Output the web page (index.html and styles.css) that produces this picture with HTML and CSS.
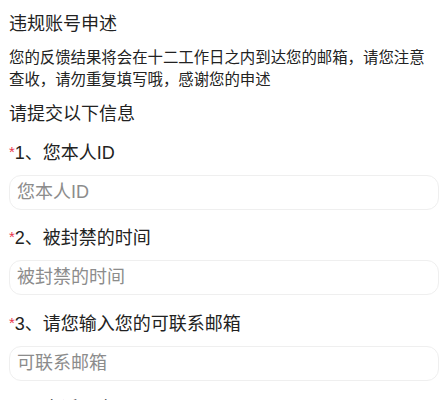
FILE: index.html
```html
<!DOCTYPE html>
<html lang="zh-CN">
<head>
<meta charset="utf-8">
<title>违规账号申述</title>
<link rel="stylesheet" href="styles.css">
</head>
<body>
<div class="page">
  <h1 class="title">违规账号申述</h1>
  <p class="notice">您的反馈结果将会在十二工作日之内到达您的邮箱，请您注意查收，请勿重复填写哦，感谢您的申述</p>
  <h2 class="section">请提交以下信息</h2>
  <form class="form">
    <div class="item">
      <label class="label"><span class="req">*</span>1、您本人ID</label>
      <input class="field" type="text" placeholder="您本人ID">
    </div>
    <div class="item">
      <label class="label"><span class="req">*</span>2、被封禁的时间</label>
      <input class="field" type="text" placeholder="被封禁的时间">
    </div>
    <div class="item">
      <label class="label"><span class="req">*</span>3、请您输入您的可联系邮箱</label>
      <input class="field" type="text" placeholder="可联系邮箱">
    </div>
    <div class="item">
      <label class="label"><span class="req">*</span>4、申诉理由</label>
      <input class="field" type="text" placeholder="申诉理由">
    </div>
  </form>
</div>
</body>
</html>
```
FILE: styles.css
```css
* { box-sizing: border-box; }
html, body { margin: 0; padding: 0; background: #fff; }
body {
  font-family: "Liberation Sans", "Noto Sans CJK SC", sans-serif;
  color: #222;
}
.page { padding: 10.5px 9px 0 9px; }
.title {
  margin: 0;
  font-size: 18px;
  line-height: 26px;
  font-weight: 400;
}
.notice {
  margin: 10.5px 0 0 0;
  font-size: 15.4px;
  line-height: 22px;
  color: #222;
}
.section {
  margin: 9.5px 0 0 0;
  font-size: 18px;
  line-height: 26px;
  font-weight: 400;
}
.form { margin: 13px 0 0 0; display: flex; flex-direction: column; gap: 15.5px; }
.item { display: flex; flex-direction: column; gap: 9px; }
.label {
  font-size: 18px;
  line-height: 26px;
  color: #222;
}
.req {
  color: #e8334a;
  font-size: 15px;
  vertical-align: 2px;
  line-height: 1;
}
.field {
  width: 100%;
  height: 35px;
  margin: 0;
  border: 1px solid #efefef;
  border-radius: 12px;
  padding: 0 7px;
  font-family: inherit;
  font-size: 18px;
  color: #222;
  background: #fff;
  outline: none;
}
.field::placeholder { color: #8c8c8c; }
```
